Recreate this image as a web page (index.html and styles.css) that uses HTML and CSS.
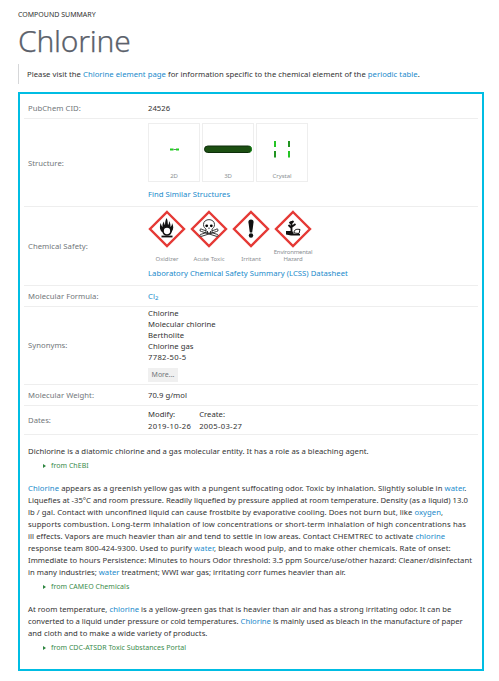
FILE: index.html
```html
<!DOCTYPE html>
<html lang="en">
<head>
<meta charset="utf-8">
<title>Chlorine</title>
<link rel="stylesheet" href="styles.css">
</head>
<body>
<header>
<div class="kicker">COMPOUND SUMMARY</div>
<h1>Chlorine</h1>
<p class="note">Please visit the <a>Chlorine element page</a> for information specific to the chemical element of the <a>periodic table</a>.</p>
</header>
<main class="summary">
<dl>
<div class="row cid"><dt>PubChem CID:</dt><dd>24526</dd></div>
<div class="row structure"><dt>Structure:</dt><dd>
<div class="thumbs">
<figure><svg viewBox="0 0 50 44"><path d="M21 25.500h3.500" stroke="#1fd01f" stroke-width="2"/><path d="M24.500 25.500h2.500" stroke="#777"/><path d="M27 25.500h3" stroke="#1fd01f" stroke-width="2"/></svg><figcaption>2D</figcaption></figure>
<figure><svg viewBox="0 0 50 44"><rect x="1.500" y="22" width="47" height="6.500" rx="3.250" fill="#1c4f12" stroke="#0c2d0a"/><path d="M46.500 22q2 1 2 3.250t-2 3.250" fill="none" stroke="#20a020"/></svg><figcaption>3D</figcaption></figure>
<figure><svg viewBox="0 0 50 44"><path d="M18 17v6M32 27v6.500" stroke="#25c425" stroke-width="2"/><path d="M32 17v6M18 27v6.500" stroke="#219421" stroke-width="2"/></svg><figcaption>Crystal</figcaption></figure>
</div>
<a>Find Similar Structures</a></dd></div>
<div class="row safety"><dt>Chemical Safety:</dt><dd>
<div class="hazards">
<figure><svg viewBox="0 0 38 38"><path class="diamond" d="M19 2 36 19 19 36 2 19Z"/><path d="M14 22c-3-3-2-6-1.500-9 1 2 1 3 2 4-.3-3 .5-4 1.500-5.500 0 2 .5 3 1 3.500 0-3 .5-5 1.500-7 1.500 2 1 5 1.500 7 1-1 1-2 1-4 1.500 2 1.500 4 1.500 6 1-1 1.500-2 1.500-4 1.500 3 2 6-.5 9z" fill="#111"/><circle cx="19" cy="21" r="4" fill="#fff" stroke="#111" stroke-width="1.700"/><path d="M13.500 26.500h11" stroke="#111" stroke-width="1.800"/></svg><figcaption>Oxidizer</figcaption></figure>
<figure><svg viewBox="0 0 38 38"><path class="diamond" d="M19 2 36 19 19 36 2 19Z"/><g fill="#fff" stroke="#222" stroke-width=".9"><path d="M10 19.500q1-1.500 2 0l14 4.500q2 0 2 1.500t-2 .7L11.500 21.500q-2 0-1.500-2zM28 19.500q-1-1.500-2 0L12 24q-2 0-2 1.500t2 .7L26.500 21.500q2 0 1.500-2z"/><path d="M13.500 14.500c0-6.500 11-6.500 11 0 0 3-1.500 3.500-2.500 4.500v4h-6v-4c-1-1-2.500-1.500-2.500-4.500z"/></g><circle cx="16.700" cy="15.800" r="1.400"/><circle cx="21.300" cy="15.800" r="1.400"/><path d="M19 17.500v1.500M17.500 21v2M20.500 21v2" stroke="#222" stroke-width=".9"/></svg><figcaption>Acute Toxic</figcaption></figure>
<figure><svg viewBox="0 0 38 38"><path class="diamond" d="M19 2 36 19 19 36 2 19Z"/><path d="M16.400 12q0-2.500 2.600-2.500t2.600 2.500L20.200 22.500h-2.400z" fill="#111"/><circle cx="19" cy="25.500" r="2.200" fill="#111"/></svg><figcaption>Irritant</figcaption></figure>
<figure><svg viewBox="0 0 38 38"><path class="diamond" d="M19 2 36 19 19 36 2 19Z"/><path d="M17.500 23V11M17.500 18l-3-3M17.500 17l4-3M17.500 14l-2-2M17.500 13l2-2" stroke="#111" stroke-width="1.800" fill="none"/><path d="M12 21h6l2 3h6v1.500h-9l-5-1z" fill="#111"/><path d="M20 23c0-4 3-4 6-3.500l-1 4z" fill="#fff" stroke="#111"/></svg><figcaption class="narrow">Environmental<br>Hazard</figcaption></figure>
</div>
<a>Laboratory Chemical Safety Summary (LCSS) Datasheet</a></dd></div>
<div class="row formula"><dt>Molecular Formula:</dt><dd><a>Cl<sub>2</sub></a></dd></div>
<div class="row synonyms"><dt>Synonyms:</dt><dd>Chlorine<br>Molecular chlorine<br>Bertholite<br>Chlorine gas<br><span class="number">7782-50-5</span><br><button>More...</button></dd></div>
<div class="row weight"><dt>Molecular Weight:</dt><dd>70.9 g/mol</dd></div>
<div class="row dates"><dt>Dates:</dt><dd><span>Modify:<br><span class="number">2019-10-26</span></span><span>Create:<br><span class="number">2005-03-27</span></span></dd></div>
</dl>
<section class="descriptions">
<p>Dichlorine is a diatomic chlorine and a gas molecular entity. It has a role as a bleaching agent.</p>
<div class="source">from ChEBI</div>
<p><span class="loose"><a>Chlorine</a> appears as a greenish yellow gas with a pungent suffocating odor. Toxic by inhalation. Slightly soluble in <a>water</a>.</span><br><span class="tight">Liquefies at -35°C and room pressure. Readily liquefied by pressure applied at room temperature. Density (as a liquid) 13.0</span><br><span class="open">lb / gal. Contact with unconfined liquid can cause frostbite by evaporative cooling. Does not burn but, like <a>oxygen</a>,</span><br><span class="wide">supports combustion. Long-term inhalation of low concentrations or short-term inhalation of high concentrations has</span><br><span class="open">ill effects. Vapors are much heavier than air and tend to settle in low areas. Contact CHEMTREC to activate <a>chlorine</a></span><br><span class="wider">response team 800-424-9300. Used to purify <a>water</a>, bleach wood pulp, and to make other chemicals. Rate of onset:</span><br>Immediate to hours Persistence: Minutes to hours Odor threshold: 3.5 ppm Source/use/other hazard: Cleaner/disinfectant<br><span class="tight">in many industries; <a>water</a> treatment; WWI war gas; irritating corr fumes heavier than air.</span></p>
<div class="source">from CAMEO Chemicals</div>
<p>At room temperature, <a>chlorine</a> is a yellow-green gas that is heavier than air and has a strong irritating odor. It can be<br><span class="tighter">converted to a liquid under pressure or cold temperatures. <a>Chlorine</a> is mainly used as bleach in the manufacture of paper</span><br>and cloth and to make a wide variety of products.</p>
<div class="source">from CDC-ATSDR Toxic Substances Portal</div>
</section>
</main>
</body>
</html>
```
FILE: styles.css
```css
* { box-sizing: border-box; margin: 0; padding: 0; }
body { width: 499px; height: 681px; padding: 9px 15px 0 18px; background: #fff; color: #333; font: 7.7px/12px "Noto Sans", sans-serif; letter-spacing: .03px; white-space: nowrap; overflow: hidden; }
a { color: #198acb; }
.kicker { font-size: 7px; line-height: 12px; letter-spacing: 0; }
h1 { margin-top: 1px; font-size: 30px; font-weight: 300; line-height: 38px; letter-spacing: -.25px; color: #5b616b; -webkit-text-stroke: .25px #5b616b; }
.note { margin-top: 4px; height: 20px; border-left: 1px solid #d6d7d9; padding-left: 8px; line-height: 20px; }
.summary { margin-top: 8px; width: 466px; height: 579px; border: 2px solid #00bde3; padding: 4px 4px 0; }
.row { display: grid; grid-template-columns: 120px 1fr; align-items: center; padding-left: 4px; border-bottom: 1px solid #eee; }
dt { color: #71767a; }
.cid { height: 21px; }
.structure { height: 88px; }
.safety { height: 79px; }
.formula { height: 21px; }
.synonyms { height: 78px; line-height: 11px; }
.weight { height: 21px; }
.dates { height: 29px; }
.dates dd { display: flex; gap: 8px; }
.structure dd, .safety dd, .synonyms dd { align-self: start; }
.number { letter-spacing: .3px; }
.thumbs { display: flex; gap: 2px; padding-top: 4px; margin-bottom: 6px; }
.thumbs figure { width: 52px; height: 59px; border: 1px solid #eee; text-align: center; }
.thumbs svg { display: block; width: 50px; height: 44px; }
figcaption { font-size: 6px; line-height: 7px; letter-spacing: -.05px; color: #8b8f93; text-align: center; }
.thumbs figcaption { margin-top: 5px; }
.hazards { display: flex; gap: 4px; padding-top: 3px; height: 60px; }
.hazards figure { width: 38px; height: 57px; display: flex; flex-direction: column; align-items: center; }
.hazards svg { width: 38px; height: 38px; flex: none; }
.hazards figcaption { margin: auto -5px 4px; }
.hazards .narrow { letter-spacing: -.2px; }
.diamond { fill: #fff; stroke: #e53935; stroke-width: 2.4; }
sub { font-size: 6px; line-height: 0; vertical-align: -1px; }
.synonyms dd { padding-top: 1px; }
button { display: block; margin-top: 5px; width: 30px; height: 14px; border: 0; background: #f0f0f0; color: #71767a; font: 7px/14px "Noto Sans", sans-serif; }
.descriptions { padding: 10px 4px 0; }
.tighter { letter-spacing: -.02px; }
.tight { letter-spacing: 0; }
.open { letter-spacing: .05px; }
.loose { letter-spacing: .07px; }
.wider { letter-spacing: .1px; }
.wide { letter-spacing: .12px; }
.source { margin: 3px 0 10px 15px; height: 12px; display: flex; align-items: center; gap: 5px; color: #3b8c4c; font-size: 7px; }
.source::before { content: ""; border: 2.5px solid transparent; border-left: 3px solid #2e8540; border-right: 0; }
```
